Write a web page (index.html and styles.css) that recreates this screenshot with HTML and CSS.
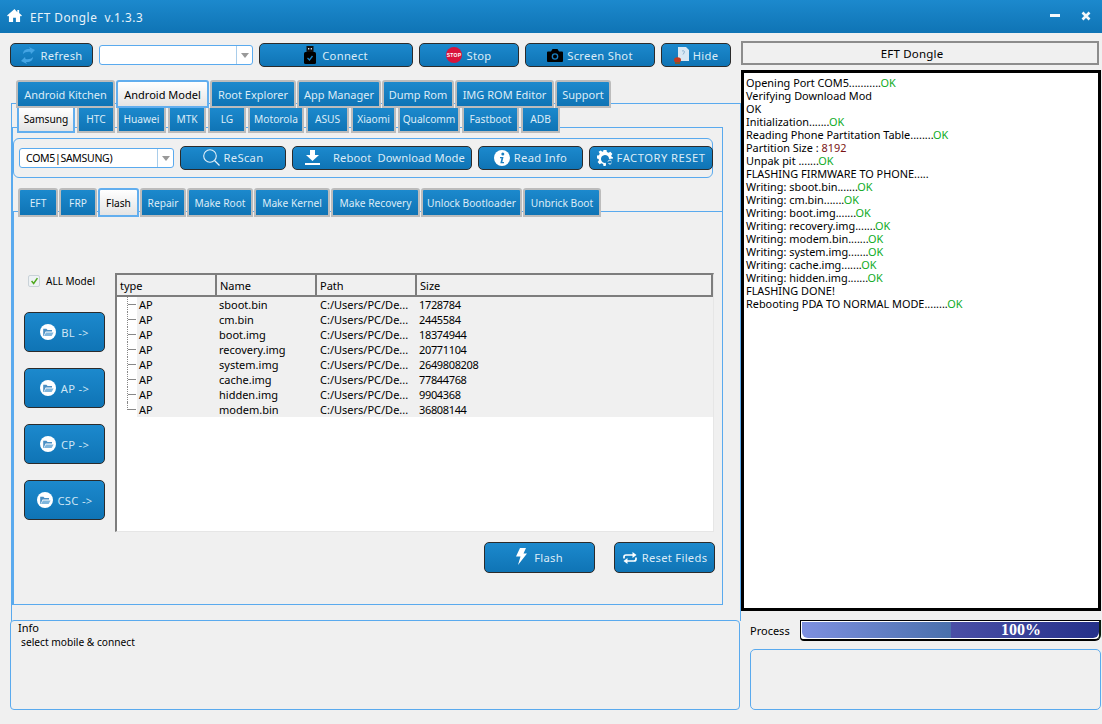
FILE: index.html
```html
<!DOCTYPE html>
<html lang="en">
  <head>
    <meta charset="UTF-8" />
    <meta name="viewport" content="width=device-width, initial-scale=1.0" />
    <link rel="stylesheet" href="styles.css">
    <title>EFT Dongle</title>
  </head>
  <body>
    <svg class="sprite" width="0" height="0">
      <symbol id="i-folder" viewBox="0 0 20 20">
        <circle cx="10" cy="10" r="10" fill="#fff" />
        <path d="M4 6h4l1.500 1.500H15v2H7L4.500 15H4z" fill="#4a8fc4" />
        <path d="M7.500 10.500H17L14.500 15H5z" fill="#7fb6dd" />
      </symbol>
    </svg>

    <header class="titlebar">
      <svg class="home-icon" viewBox="0 0 16 14"><path d="M8 0L0 7l1 1 1-.8V14h4.500V9.500h3V14H14V7.200l1 .8 1-1-3-2.600V1h-2v2.600z" fill="#fff" /></svg>
      <span class="app-title">EFT Dongle&nbsp; v.1.3.3</span>
      <span class="window-btns">
        <svg class="win-icon" viewBox="0 0 10 10"><rect y="3" width="10" height="3" fill="#f4f8fb" /></svg>
        <svg class="win-icon" viewBox="0 0 10 10"><path d="M1.500 1.500l7 7M8.500 1.500l-7 7" stroke="#f4f8fb" stroke-width="2.600" /></svg>
      </span>
    </header>

    <div class="main">
      <div class="left">
        <div class="toolbar">
          <button class="btn">
            <svg class="icon-refresh" viewBox="0 0 16 17"><path d="M3 7C3 3.500 6 1.500 10 2L9 0l6 3-4 4-.5-2C7.500 4.500 5 5 3 7z" fill="#45a5e4" /><path d="M13 10c0 3.500-3 5.500-7 5l1 2-6-3 4-4 .5 2c3 .5 5.500 0 7.500-2z" fill="#45a5e4" /></svg>
            Refresh
          </button>
          <div class="combo"><span class="combo-text"></span><span class="combo-arrow"></span></div>
          <button class="btn">
            <svg class="icon-usb" viewBox="0 0 12 18"><path d="M2.500 0h7v6h-7z" fill="#111" /><rect x="4" y="2" width="1.300" height="1.500" fill="#ddd" /><rect x="6.700" y="2" width="1.300" height="1.500" fill="#ddd" /><rect y="6" width="12" height="12" rx="1.500" fill="#000" /><path d="M3.500 12l2 2 3-4" stroke="#1a86c8" stroke-width="1.300" fill="none" /></svg>
            Connect
          </button>
          <button class="btn">
            <svg class="icon-stop" viewBox="0 0 16 16"><circle cx="8" cy="8" r="8" fill="#d9143c" /><text x="8" y="9.800" text-anchor="middle" class="stop-text">STOP</text></svg>
            Stop
          </button>
          <button class="btn">
            <svg class="icon-camera" viewBox="0 0 16 13"><path d="M1 2.500h3L5.500 0h5L12 2.500h3a1 1 0 0 1 1 1V12a1 1 0 0 1-1 1H1a1 1 0 0 1-1-1V3.500a1 1 0 0 1 1-1z" fill="#000" /><circle cx="8" cy="7.500" r="3.300" fill="#1a80c2" /><circle cx="8" cy="7.500" r="2" fill="#000" /></svg>
            Screen Shot
          </button>
          <button class="btn">
            <svg class="icon-hide" viewBox="0 0 15 17"><path d="M4 0h8l3 3v11H4z" fill="#d9e8f4" /><path d="M8 4c2-1 3 .5 2 2L9 7.500" stroke="#8fb4d2" fill="none" /><ellipse cx="3.500" cy="13" rx="3.500" ry="2.800" fill="#c23a20" /><rect x="1" y="15" width="5" height="2" fill="#7a5a30" /></svg>
            Hide
          </button>
        </div>

        <div class="tabs tabs-main">
          <span class="tab">Android Kitchen</span>
          <span class="tab active">Android Model</span>
          <span class="tab">Root Explorer</span>
          <span class="tab">App Manager</span>
          <span class="tab">Dump Rom</span>
          <span class="tab">IMG ROM Editor</span>
          <span class="tab">Support</span>
        </div>

        <div class="pane-outer">
          <div class="tabs tabs-brand">
            <span class="tab">Samsung</span>
            <span class="tab">HTC</span>
            <span class="tab">Huawei</span>
            <span class="tab">MTK</span>
            <span class="tab">LG</span>
            <span class="tab">Motorola</span>
            <span class="tab">ASUS</span>
            <span class="tab">Xiaomi</span>
            <span class="tab">Qualcomm</span>
            <span class="tab">Fastboot</span>
            <span class="tab">ADB</span>
          </div>

          <div class="pane-inner">
            <div class="device-group">
              <div class="combo"><span class="combo-text combo-port">COM5|SAMSUNG)</span><span class="combo-arrow"></span></div>
              <button class="btn">
                <svg class="icon-search" viewBox="0 0 17 17"><circle cx="7" cy="7" r="6.300" fill="none" stroke="#e4f1fa" stroke-width="1.100" /><path d="M11.500 11.500L16.500 16.500" stroke="#e4f1fa" stroke-width="1.300" /></svg>
                ReScan
              </button>
              <button class="btn btn-wide">
                <svg class="icon-download" viewBox="0 0 15 15"><path d="M5 0h5v5h4l-6.500 6L1 5h4z" fill="#fff" /><rect y="13" width="15" height="2" fill="#fff" /></svg>
                <span>Reboot&nbsp; Download Mode</span>
              </button>
              <button class="btn">
                <svg class="icon-info" viewBox="0 0 16 16"><circle cx="8" cy="8" r="8" fill="#fff" /><circle cx="8.800" cy="4" r="1.500" fill="#1a80c2" /><path d="M6 7h3.500L8.300 12H10v1.300H6.300L7.500 8.300H6z" fill="#1a80c2" /></svg>
                Read Info
              </button>
              <button class="btn btn-caps">
                <svg class="icon-gear" viewBox="0 0 16 16"><path d="M6.500 0h3l.4 2 1.700.8L13.400 1.700l2 2.200-1.200 1.700.6 1.500 2.200.4v1l-5 .5a4 4 0 1 0-3.200 3.800L9 15l-.5 1h-2l-.4-2-1.700-.8-1.800 1.100-2-2.200 1.200-1.700L1.700 9 0 8.600v-3l2-.4.700-1.700L1.600 1.700 3.700.6l1.600 1.200L6.100 1.500z" fill="#fff" /><path d="M11 11.500a2 2 0 0 1 3.500-.5M14.500 13a2 2 0 0 1-3 .5" stroke="#fff" fill="none" /></svg>
                FACTORY RESET
              </button>
            </div>

            <div class="tabs tabs-tool">
              <span class="tab">EFT</span>
              <span class="tab">FRP</span>
              <span class="tab active">Flash</span>
              <span class="tab">Repair</span>
              <span class="tab">Make Root</span>
              <span class="tab">Make Kernel</span>
              <span class="tab">Make Recovery</span>
              <span class="tab">Unlock Bootloader</span>
              <span class="tab">Unbrick Boot</span>
            </div>

            <div class="pane-tool">
              <div class="side">
                <label class="check-row">
                  <span class="checkbox"><svg viewBox="0 0 12 12"><path d="M2.500 6l2.500 3 4.500-6.500" stroke="#4fa81e" stroke-width="1.800" fill="none" /></svg></span>
                  ALL Model
                </label>
                <button class="btn btn-part"><svg class="icon-folder"><use href="#i-folder" /></svg>BL -&gt;</button>
                <button class="btn btn-part"><svg class="icon-folder"><use href="#i-folder" /></svg>AP -&gt;</button>
                <button class="btn btn-part"><svg class="icon-folder"><use href="#i-folder" /></svg>CP -&gt;</button>
                <button class="btn btn-part"><svg class="icon-folder"><use href="#i-folder" /></svg>CSC -&gt;</button>
              </div>

              <div class="content">
                <div class="file-table">
                  <div class="file-head">
                    <span>type</span>
                    <span>Name</span>
                    <span>Path</span>
                    <span>Size</span>
                  </div>
                  <div class="file-row"><span class="branch"></span><span>AP</span><span>sboot.bin</span><span>C:/Users/PC/De...</span><span>1728784</span></div>
                  <div class="file-row"><span class="branch"></span><span>AP</span><span>cm.bin</span><span>C:/Users/PC/De...</span><span>2445584</span></div>
                  <div class="file-row"><span class="branch"></span><span>AP</span><span>boot.img</span><span>C:/Users/PC/De...</span><span>18374944</span></div>
                  <div class="file-row"><span class="branch"></span><span>AP</span><span>recovery.img</span><span>C:/Users/PC/De...</span><span>20771104</span></div>
                  <div class="file-row"><span class="branch"></span><span>AP</span><span>system.img</span><span>C:/Users/PC/De...</span><span>2649808208</span></div>
                  <div class="file-row"><span class="branch"></span><span>AP</span><span>cache.img</span><span>C:/Users/PC/De...</span><span>77844768</span></div>
                  <div class="file-row"><span class="branch"></span><span>AP</span><span>hidden.img</span><span>C:/Users/PC/De...</span><span>9904368</span></div>
                  <div class="file-row"><span class="branch last"></span><span>AP</span><span>modem.bin</span><span>C:/Users/PC/De...</span><span>36808144</span></div>
                </div>
                <div class="actions">
                  <button class="btn btn-flash">
                    <svg class="icon-bolt" viewBox="0 0 11 17"><path d="M4 0h6L7.500 5.500H11L2 17l2.500-8.500H0z" fill="#fff" /></svg>
                    Flash
                  </button>
                  <button class="btn btn-reset">
                    <svg class="icon-loop" viewBox="0 0 16 12"><path d="M2 6.500V5a2 2 0 0 1 2-2h7" stroke="#fff" stroke-width="1.700" fill="none" /><path d="M10.500 0l4 3-4 3z" fill="#fff" /><path d="M14 5.500V7a2 2 0 0 1-2 2H5" stroke="#fff" stroke-width="1.700" fill="none" /><path d="M5.500 6l-4 3 4 3z" fill="#fff" /></svg>
                    Reset Fileds
                  </button>
                </div>
              </div>
            </div>
          </div>
        </div>

        <div class="info-box">
          <div class="info-title">Info</div>
          <div class="info-text">select mobile &amp; connect</div>
        </div>
      </div>

      <div class="right">
        <div class="log-head">EFT Dongle</div>
        <div class="log">
          <div>Opening Port COM5...........<b>OK</b></div>
          <div>Verifying Download Mod</div>
          <div>OK</div>
          <div>Initialization.......<b>OK</b></div>
          <div>Reading Phone Partitation Table........<b>OK</b></div>
          <div>Partition Size : <i>8192</i></div>
          <div>Unpak pit .......<b>OK</b></div>
          <div>FLASHING FIRMWARE TO PHONE.....</div>
          <div>Writing: sboot.bin.......<b>OK</b></div>
          <div>Writing: cm.bin.......<b>OK</b></div>
          <div>Writing: boot.img.......<b>OK</b></div>
          <div>Writing: recovery.img.......<b>OK</b></div>
          <div>Writing: modem.bin.......<b>OK</b></div>
          <div>Writing: system.img.......<b>OK</b></div>
          <div>Writing: cache.img.......<b>OK</b></div>
          <div>Writing: hidden.img.......<b>OK</b></div>
          <div>FLASHING DONE!</div>
          <div>Rebooting PDA TO NORMAL MODE........<b>OK</b></div>
        </div>
        <div class="process">
          <span class="process-label">Process</span>
          <div class="progress"><div class="progress-chunk">100%</div></div>
        </div>
        <div class="status-box"></div>
      </div>
    </div>
  </body>
</html>
```

FILE: styles.css
```css
* {
  box-sizing: border-box;
}

html,
body {
  margin: 0;
  height: 724px;
  overflow: hidden;
}

body {
  background: #f0f0f0;
  color: #000;
  font-family: "Noto Sans", "Liberation Sans", sans-serif;
  font-size: 11px;
}

.sprite {
  display: block;
  height: 0;
}

/* title bar */
.titlebar {
  display: flex;
  align-items: center;
  height: 33px;
  padding: 0 11px 0 7px;
  background: linear-gradient(#1c89cd, #0f74b5);
  color: #e8f3fa;
}

.home-icon {
  width: 15px;
  height: 13px;
  margin-bottom: 2px;
}

.app-title {
  margin-left: 8px;
  font-size: 11.8px;
  letter-spacing: 0.5px;
}

.window-btns {
  display: flex;
  gap: 21px;
  margin-left: auto;
  margin-bottom: 1px;
}

.win-icon {
  width: 10px;
  height: 10px;
}

/* layout */
.main {
  display: grid;
  grid-template-columns: 741px 361px;
}

.left {
  padding-top: 10px;
}

.right {
  padding-top: 8px;
}

/* buttons */
.btn {
  display: flex;
  align-items: center;
  justify-content: center;
  gap: 4px;
  margin: 0;
  padding: 0;
  border: 1px solid #2b2b2b;
  border-radius: 5px;
  background: linear-gradient(#1c89cd, #0f74b5);
  color: #dcecf7;
  font-family: inherit;
  font-size: 11.2px;
  letter-spacing: 0.3px;
}

.toolbar {
  display: grid;
  grid-template-columns: 83px 154px 154px 100px 130px 70px;
  gap: 6px;
  align-items: center;
  height: 24px;
  margin-left: 10px;
}

.toolbar .btn {
  height: 24px;
}

.icon-refresh {
  width: 16px;
  height: 17px;
}

.icon-usb {
  width: 12px;
  height: 18px;
  margin-right: 2px;
}

.icon-stop {
  width: 16px;
  height: 16px;
}

.stop-text {
  fill: #fff;
  font-family: "Liberation Sans", sans-serif;
  font-size: 5px;
  font-weight: bold;
}

.icon-camera {
  width: 16px;
  height: 13px;
}

.icon-hide {
  width: 15px;
  height: 17px;
}

.icon-search {
  width: 17px;
  height: 17px;
}

.icon-download {
  width: 15px;
  height: 15px;
  margin-right: 13px;
}

.icon-info {
  width: 16px;
  height: 16px;
}

.icon-gear {
  width: 16px;
  height: 16px;
}

.icon-folder {
  width: 16px;
  height: 16px;
}

.icon-bolt {
  width: 11px;
  height: 17px;
  margin-right: 3px;
  margin-bottom: 3px;
}

.icon-loop {
  width: 16px;
  height: 12px;
}

/* combo boxes */
.combo {
  display: flex;
  height: 20px;
  border: 1px solid #5aaaee;
  border-radius: 3px;
  background: #fff;
}

.combo-text {
  flex: 1;
  padding-left: 6px;
  font-size: 11px;
  line-height: 18px;
}

.combo-port {
  font-size: 10.5px;
  letter-spacing: -0.3px;
}

.combo-arrow {
  display: flex;
  align-items: center;
  justify-content: center;
  width: 16px;
  border-left: 1px solid #a9cdea;
}

.combo-arrow::after {
  content: "";
  border-top: 5px solid #999;
  border-left: 4px solid transparent;
  border-right: 4px solid transparent;
}

/* tabs */
.tabs {
  display: grid;
  position: relative;
  z-index: 1;
}

.tab {
  display: flex;
  align-items: center;
  justify-content: center;
  border: 2px solid #bcbcbc;
  border-radius: 3px 3px 0 0;
  background: linear-gradient(#1c89cd, #0f74b5);
  color: #dcecf7;
  font-size: 11px;
  white-space: nowrap;
}

.tab.active {
  border-color: #62aeee;
  background: linear-gradient(#fff, #e4e4e4);
  color: #000;
}

.tabs-main {
  grid-template-columns: 99px 93px 86px 84px 72px 99px 56px;
  gap: 1px;
  height: 28px;
  margin: 13px 0 -5px 16px;
}

.tabs-brand {
  grid-template-columns: 58px 38px 49px 38px 38px 56px 43px 45px 62px 57px 39px;
  gap: 2px;
  height: 25px;
  margin: 4px 0 -6px 5px;
}

.tabs-brand .tab {
  padding-bottom: 2px;
  border-top: 0;
  border-radius: 0;
  font-size: 10.2px;
}

.tabs-brand .tab:first-child {
  border-color: #62aeee;
  background: linear-gradient(#fff, #e4e4e4);
  color: #000;
}

.tabs-tool {
  grid-template-columns: 40px 38px 41px 46px 66px 76px 89px 101px 78px;
  gap: 1px;
  height: 29px;
  margin: 10px 0 -6px 5px;
}

.tabs-tool .tab {
  font-size: 10.2px;
}

/* panes */
.pane-outer {
  width: 730px;
  height: 518px;
  margin-left: 11px;
  border: 1px solid #5aaaee;
  border-bottom: 0;
}

.pane-inner {
  width: 711px;
  height: 478px;
  border: 1px solid #5aaaee;
}

.device-group {
  display: grid;
  grid-template-columns: 155px 106px 180px 105px 124px;
  gap: 6px;
  align-items: center;
  width: 700px;
  height: 40px;
  margin-top: 10px;
  padding-left: 5px;
  border: 1px solid #5aaaee;
  border-radius: 6px;
}

.device-group .btn {
  height: 24px;
  padding-bottom: 1px;
}

.device-group .btn-wide {
  gap: 0;
  padding-left: 6px;
  letter-spacing: 0.1px;
}

.btn-caps {
  letter-spacing: 0.5px;
}

.pane-tool {
  display: flex;
  width: 709px;
  height: 393px;
  border-top: 1px solid #5aaaee;
  border-left: 1px solid #5aaaee;
  padding: 61px 0 0 10px;
}

/* flash tab */
.side {
  display: flex;
  flex-direction: column;
  width: 81px;
  margin-right: 10px;
}

.check-row {
  display: flex;
  align-items: center;
  gap: 6px;
  height: 14px;
  margin: 1px 0 24px 4px;
  font-size: 10px;
  white-space: nowrap;
}

.checkbox {
  width: 12px;
  height: 12px;
  border: 1px solid #c9d2d8;
  border-radius: 2px;
  background: #eef2f4;
}

.checkbox svg {
  display: block;
  width: 11px;
  height: 10px;
}

.btn-part {
  flex: none;
  height: 40px;
  margin-bottom: 16px;
  gap: 5px;
  color: #cfe5f4;
}

.content {
  width: 600px;
}

.file-table {
  width: 599px;
  height: 259px;
  border: 1px solid #e6e6e6;
  border-top: 2px solid #7d7d7d;
  border-left: 2px solid #7d7d7d;
  background: #fff;
}

.file-head {
  display: grid;
  grid-template-columns: 100px 100px 100px 1fr;
  height: 22px;
  background: #f0f0f0;
}

.file-head span {
  padding: 3px 0 0 3px;
  border-right: 2px solid #7d7d7d;
  border-bottom: 2px solid #7d7d7d;
  font-size: 11px;
}

.file-row {
  display: grid;
  grid-template-columns: 20px 80px 100px 100px 1fr;
  height: 15px;
  line-height: 15px;
}

.file-row span:not(.branch) {
  padding-left: 2px;
  background: #f0f0f0;
}

.file-row span:nth-child(4) {
  padding-left: 3px;
}

.file-row span:last-child {
  letter-spacing: -0.35px;
}

.branch {
  height: 15px;
  margin-left: 10px;
  border-left: 1px dotted #888;
  background: linear-gradient(#888 0 0) 0 7px / 8px 1px no-repeat;
}

.branch.last {
  height: 8px;
}

.actions {
  display: flex;
  justify-content: flex-end;
  gap: 19px;
  margin-top: 10px;
}

.btn-flash {
  width: 111px;
  height: 31px;
}

.btn-reset {
  width: 101px;
  height: 31px;
  gap: 4px;
}

/* info */
.info-box {
  width: 730px;
  height: 90px;
  margin: -1px 0 0 10px;
  padding-left: 7px;
  border: 1px solid #5aaaee;
  border-radius: 4px;
}

.info-title {
  line-height: 13px;
}

.info-text {
  margin: 2px 0 0 3px;
  font-size: 10.2px;
  line-height: 13px;
}

/* right column */
.log-head {
  display: flex;
  align-items: center;
  justify-content: center;
  width: 358px;
  height: 24px;
  padding-right: 16px;
  border: 2px solid #8c8c8c;
  background: #f0f0f0;
  font-size: 11.5px;
  letter-spacing: 0.2px;
}

.log {
  width: 360px;
  height: 541px;
  margin-top: 5px;
  padding: 3px 0 0 2px;
  border: 3px solid #000;
  background: #fff;
  font-size: 10.9px;
  line-height: 13px;
}

.log b {
  color: #0caa1c;
  font-weight: normal;
}

.log i {
  color: #7a1414;
  font-style: normal;
}

.process {
  display: flex;
  align-items: center;
  height: 21px;
  margin: 9px 1px 0 9px;
}

.process-label {
  width: 50px;
}

.progress {
  flex: 1;
  height: 21px;
  padding: 1px 0 1px 1px;
  border: 1px solid #000;
  border-right: 2px solid #0c1c10;
  border-bottom-width: 2px;
  border-radius: 0 0 6px 4px;
  background: #fff;
}

.progress-chunk {
  height: 100%;
  padding-right: 58px;
  border-radius: 0 0 6px 6px;
  background: linear-gradient(90deg, #7e90e0, #4a70ac 50%, #4a4fa6 50%, #25318a);
  color: #fff;
  font-family: "Liberation Serif", serif;
  font-size: 16px;
  font-weight: bold;
  line-height: 16px;
  text-align: right;
}

.status-box {
  width: 351px;
  height: 61px;
  margin: 8px 0 0 9px;
  border: 1px solid #5aaaee;
  border-radius: 5px;
}
```
